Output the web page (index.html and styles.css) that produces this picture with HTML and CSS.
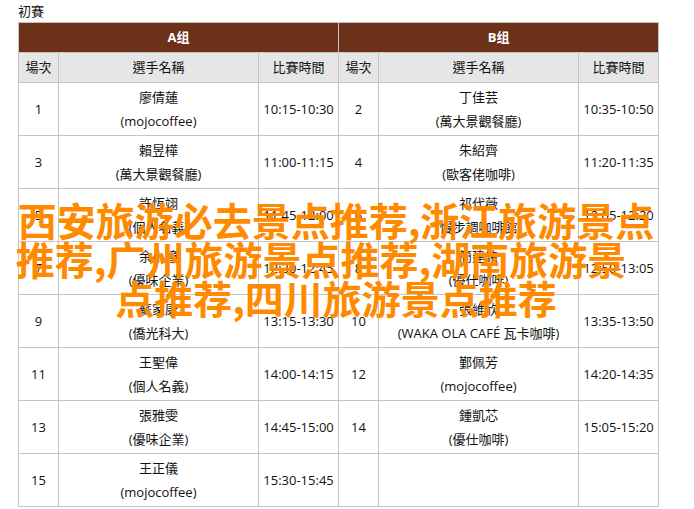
FILE: index.html
```html
<!DOCTYPE html>
<html lang="zh-Hant">
<head>
<meta charset="utf-8">
<title>初賽</title>
<link rel="stylesheet" href="styles.css">
</head>
<body>
<div class="page">
  <div class="title">初賽</div>
  <table class="sched">
    <colgroup>
      <col class="c-no"><col class="c-name"><col class="c-time">
      <col class="c-no"><col class="c-name"><col class="c-time">
    </colgroup>
    <thead>
      <tr class="group"><th colspan="3">A组</th><th colspan="3">B组</th></tr>
      <tr class="sub"><th>場次</th><th>選手名稱</th><th>比賽時間</th><th>場次</th><th>選手名稱</th><th>比賽時間</th></tr>
    </thead>
    <tbody>
      <tr>
        <td>1</td><td class="name">廖倩蓮<br>(mojocoffee)</td><td>10:15-10:30</td>
        <td>2</td><td class="name">丁佳芸<br>(萬大景觀餐廳)</td><td>10:35-10:50</td>
      </tr>
      <tr>
        <td>3</td><td class="name">賴昱樺<br>(萬大景觀餐廳)</td><td>11:00-11:15</td>
        <td>4</td><td class="name">朱紹齊<br>(歐客佬咖啡)</td><td>11:20-11:35</td>
      </tr>
      <tr>
        <td>5</td><td class="name">許恆翊<br>(個人名義)</td><td>11:45-12:00</td>
        <td>6</td><td class="name">祁代薇<br>(慢步調咖啡館)</td><td>12:05-12:20</td>
      </tr>
      <tr>
        <td>7</td><td class="name">余小瞳<br>(優味企業)</td><td>12:30-12:45</td>
        <td>8</td><td class="name">簡建銘<br>(優仕咖啡)</td><td>12:50-13:05</td>
      </tr>
      <tr>
        <td>9</td><td class="name">蘇家康<br>(僑光科大)</td><td>13:15-13:30</td>
        <td>10</td><td class="name">張維欣<br>(WAKA OLA CAFÉ 瓦卡咖啡)</td><td>13:35-13:50</td>
      </tr>
      <tr>
        <td>11</td><td class="name">王聖偉<br>(個人名義)</td><td>14:00-14:15</td>
        <td>12</td><td class="name">鄞佩芳<br>(mojocoffee)</td><td>14:20-14:35</td>
      </tr>
      <tr>
        <td>13</td><td class="name">張雅雯<br>(優味企業)</td><td>14:45-15:00</td>
        <td>14</td><td class="name">鍾凱芯<br>(優仕咖啡)</td><td>15:05-15:20</td>
      </tr>
      <tr>
        <td>15</td><td class="name">王正儀<br>(mojocoffee)</td><td>15:30-15:45</td>
        <td></td><td class="name"></td><td></td>
      </tr>
    </tbody>
  </table>
  <div class="overlay">
    <span class="ln">西安旅游必去景点推荐,浙江旅游景点</span>
    <span class="ln ln2">推荐,广州旅游景点推荐,湖南旅游景</span>
    <span class="ln">点推荐,四川旅游景点推荐</span>
  </div>
</div>
</body>
</html>
```

FILE: styles.css
```css
html, body {
  margin: 0;
  padding: 0;
  background: #ffffff;
}
body {
  font-family: "Open Sans", "Noto Sans CJK TC", sans-serif;
  font-size: 13px;
  color: #111111;
}
.page {
  position: relative;
  padding: 0 18px;
}
.title {
  height: 22px;
  line-height: 22px;
  font-size: 13px;
  color: #111;
}
.sched {
  border-collapse: collapse;
  table-layout: fixed;
  width: 641px;
}
.c-no { width: 40px; }
.c-name { width: 200px; }
.c-time { width: 80px; }
.sched th, .sched td {
  border: 1px solid #c4c4c4;
  padding: 0;
  text-align: center;
  vertical-align: middle;
  font-weight: normal;
}
.group th {
  background: #6c3119;
  color: #ffffff;
  font-weight: bold;
  height: 29px;
  line-height: 29px;
}
.sub th {
  background: #e6e6e6;
  color: #111;
  height: 29px;
  line-height: 29px;
}
.sched td {
  line-height: 24px;
}
.sched td.name {
  height: 48px;
  padding: 2px 0;
  line-height: 24px;
}
.overlay {
  position: absolute;
  left: 8px;
  top: 200px;
  width: 656px;
  text-align: center;
  font-family: "Noto Sans CJK SC", sans-serif;
  font-weight: bold;
  font-size: 39px;
  line-height: 39px;
  color: #ff8a00;
}
.ln {
  display: block;
  white-space: nowrap;
}
.ln2 {
  padding-right: 30px;
}
```
